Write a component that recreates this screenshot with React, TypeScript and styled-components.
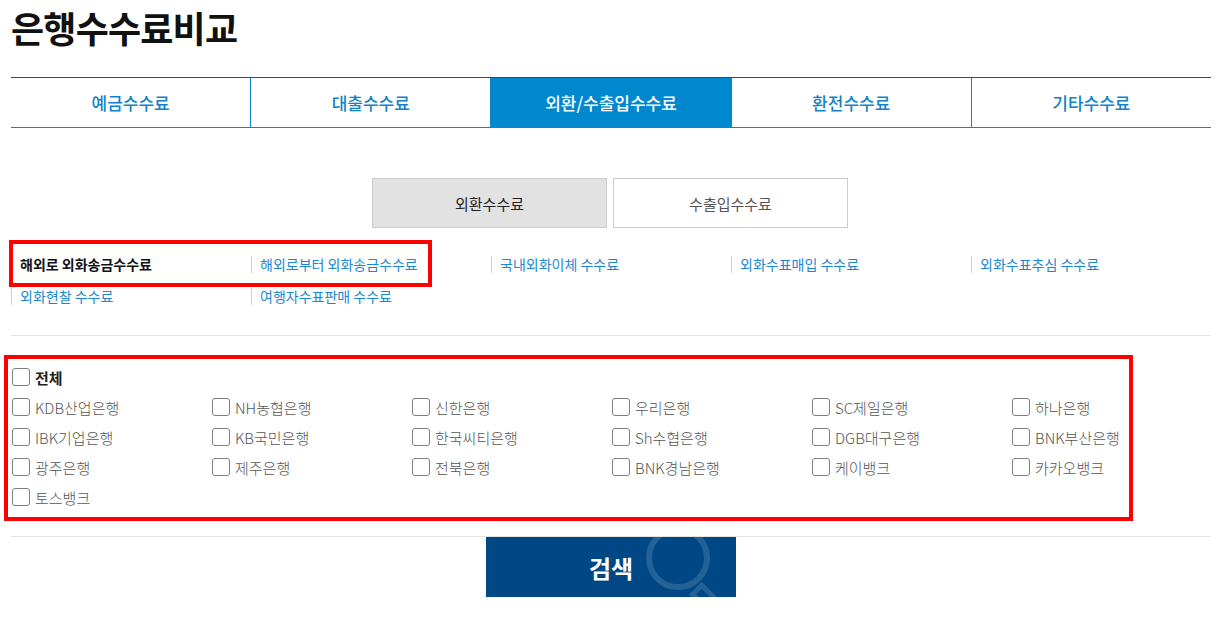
import React, { useState } from 'react'
import styled, { createGlobalStyle } from 'styled-components'

const GlobalStyle = createGlobalStyle`
  body {
    margin: 0;
    background: #fff;
    font-family: 'Noto Sans CJK KR', 'Noto Sans', sans-serif;
    color: #222;
  }
  * {
    box-sizing: border-box;
  }
`

const Page = styled.div`
  width: 1200px;
  margin-left: 11px;
`

const Header = styled.header`
  height: 77px;
  padding-top: 5px;
`

const Title = styled.h1`
  margin: 0;
  font-size: 36px;
  line-height: 44px;
  font-weight: 700;
  color: #111;
  letter-spacing: -0.8px;
`

const TabList = styled.ul`
  display: flex;
  margin: 0;
  padding: 0;
  list-style: none;
  border-top: 1px solid #1d4f80;
  border-bottom: 1px solid #0a86cc;
`

const Tab = styled.li<{ $active?: boolean }>`
  flex: 1;
  height: 49px;
  display: flex;
  align-items: center;
  justify-content: center;
  font-size: 17px;
  font-weight: 500;
  color: ${({ $active }) => ($active ? '#fff' : '#1282c8')};
  background: ${({ $active }) => ($active ? '#0088cf' : '#fff')};
  & + & {
    border-left: 1px solid #0a86cc;
  }
`

const SubTabs = styled.div`
  display: flex;
  justify-content: center;
  gap: 6px;
  margin-top: 50px;
  padding-right: 2px;
`

const SubTab = styled.button<{ $active?: boolean }>`
  width: 235px;
  height: 50px;
  font-family: inherit;
  font-size: 15px;
  color: ${({ $active }) => ($active ? '#222' : '#555')};
  background: ${({ $active }) => ($active ? '#e2e2e2' : '#fff')};
  border: 1px solid #cccccc;
  cursor: pointer;
`

const LinkArea = styled.div`
  position: relative;
  margin-top: 20px;
  display: grid;
  grid-template-columns: repeat(5, 240px);
  grid-auto-rows: 32px;
`

const FeeLink = styled.a<{ $active?: boolean }>`
  align-self: center;
  justify-self: start;
  height: 17px;
  display: flex;
  align-items: center;
  padding-left: 8px;
  border-left: 1px solid #cfcfcf;
  font-size: 14px;
  text-decoration: none;
  font-weight: ${({ $active }) => ($active ? 700 : 400)};
  color: ${({ $active }) => ($active ? '#111' : '#1a87d0')};
  cursor: pointer;
`

const Highlight = styled.div<{ $top: number; $left: number; $width: number; $height: number }>`
  position: absolute;
  top: ${({ $top }) => $top}px;
  left: ${({ $left }) => $left}px;
  width: ${({ $width }) => $width}px;
  height: ${({ $height }) => $height}px;
  border: 4px solid #ff0000;
  pointer-events: none;
`

const Divider = styled.hr<{ $gap?: number }>`
  margin: ${({ $gap }) => $gap ?? 0}px 0 0;
  border: 0;
  border-top: 1px solid #e3e3e3;
`

const BankSection = styled.div`
  position: relative;
  padding: 26px 0 24px 1px;
`

const BankGrid = styled.div`
  display: grid;
  grid-template-columns: repeat(6, 200px);
  grid-auto-rows: 30px;
`

const CheckRow = styled.label<{ $bold?: boolean }>`
  display: flex;
  align-items: center;
  gap: 5px;
  font-size: 15px;
  font-weight: ${({ $bold }) => ($bold ? 700 : 300)};
  color: ${({ $bold }) => ($bold ? '#222' : '#555')};
  cursor: pointer;
`

const Box = styled.span<{ $checked?: boolean }>`
  width: 18px;
  height: 18px;
  border: 1px solid #808080;
  border-radius: 3px;
  background: ${({ $checked }) => ($checked ? '#0088cf' : '#fff')};
  flex-shrink: 0;
`

const SearchButton = styled.button`
  position: relative;
  display: block;
  margin: 0 auto;
  width: 250px;
  height: 60px;
  border: 0;
  overflow: hidden;
  background: #004885;
  color: #fff;
  font-family: inherit;
  font-size: 24px;
  font-weight: 700;
  cursor: pointer;
`

const ButtonLabel = styled.span`
  position: relative;
  z-index: 1;
`

const SearchMark = styled.svg`
  position: absolute;
  left: 160px;
  top: -20px;
`

const mainTabs = ['예금수수료', '대출수수료', '외환/수출입수수료', '환전수수료', '기타수수료']

const feeLinks = [
  '해외로 외화송금수수료',
  '해외로부터 외화송금수수료',
  '국내외화이체 수수료',
  '외화수표매입 수수료',
  '외화수표추심 수수료',
  '외화현찰 수수료',
  '여행자수표판매 수수료',
]

const banks = [
  'KDB산업은행', 'NH농협은행', '신한은행', '우리은행', 'SC제일은행', '하나은행',
  'IBK기업은행', 'KB국민은행', '한국씨티은행', 'Sh수협은행', 'DGB대구은행', 'BNK부산은행',
  '광주은행', '제주은행', '전북은행', 'BNK경남은행', '케이뱅크', '카카오뱅크',
  '토스뱅크',
]

export default function App() {
  const [checked, setChecked] = useState<string[]>([])
  const toggle = (name: string) =>
    setChecked((prev) =>
      prev.includes(name) ? prev.filter((b) => b !== name) : [...prev, name],
    )

  return (
    <Page>
      <GlobalStyle />
      <Header>
        <Title>은행수수료비교</Title>
      </Header>
      <TabList>
        {mainTabs.map((tab, i) => (
          <Tab key={tab} $active={i === 2}>
            {tab}
          </Tab>
        ))}
      </TabList>
      <SubTabs>
        <SubTab $active>외환수수료</SubTab>
        <SubTab>수출입수수료</SubTab>
      </SubTabs>
      <LinkArea>
        {feeLinks.map((link, i) => (
          <FeeLink key={link} $active={i === 0}>
            {link}
          </FeeLink>
        ))}
        <Highlight $top={-8} $left={-2} $width={423} $height={47} />
      </LinkArea>
      <Divider $gap={23} />
      <BankSection>
        <BankGrid>
          <CheckRow $bold onClick={() => toggle('전체')}>
            <Box $checked={checked.includes('전체')} />
            전체
          </CheckRow>
          <span />
          <span />
          <span />
          <span />
          <span />
          {banks.map((bank) => (
            <CheckRow key={bank} onClick={() => toggle(bank)}>
              <Box $checked={checked.includes(bank)} />
              {bank}
            </CheckRow>
          ))}
        </BankGrid>
        <Highlight $top={19} $left={-7} $width={1129} $height={166} />
      </BankSection>
      <Divider />
      <SearchButton>
        <SearchMark width="100" height="100" viewBox="0 0 100 100">
          <circle cx="32" cy="41" r="29" fill="none" stroke="rgba(255,255,255,0.14)" strokeWidth="6" />
          <rect
            x="50"
            y="70"
            width="30"
            height="13"
            transform="rotate(45 55 76)"
            fill="none"
            stroke="rgba(255,255,255,0.14)"
            strokeWidth="5"
          />
        </SearchMark>
        <ButtonLabel>검색</ButtonLabel>
      </SearchButton>
    </Page>
  )
}
